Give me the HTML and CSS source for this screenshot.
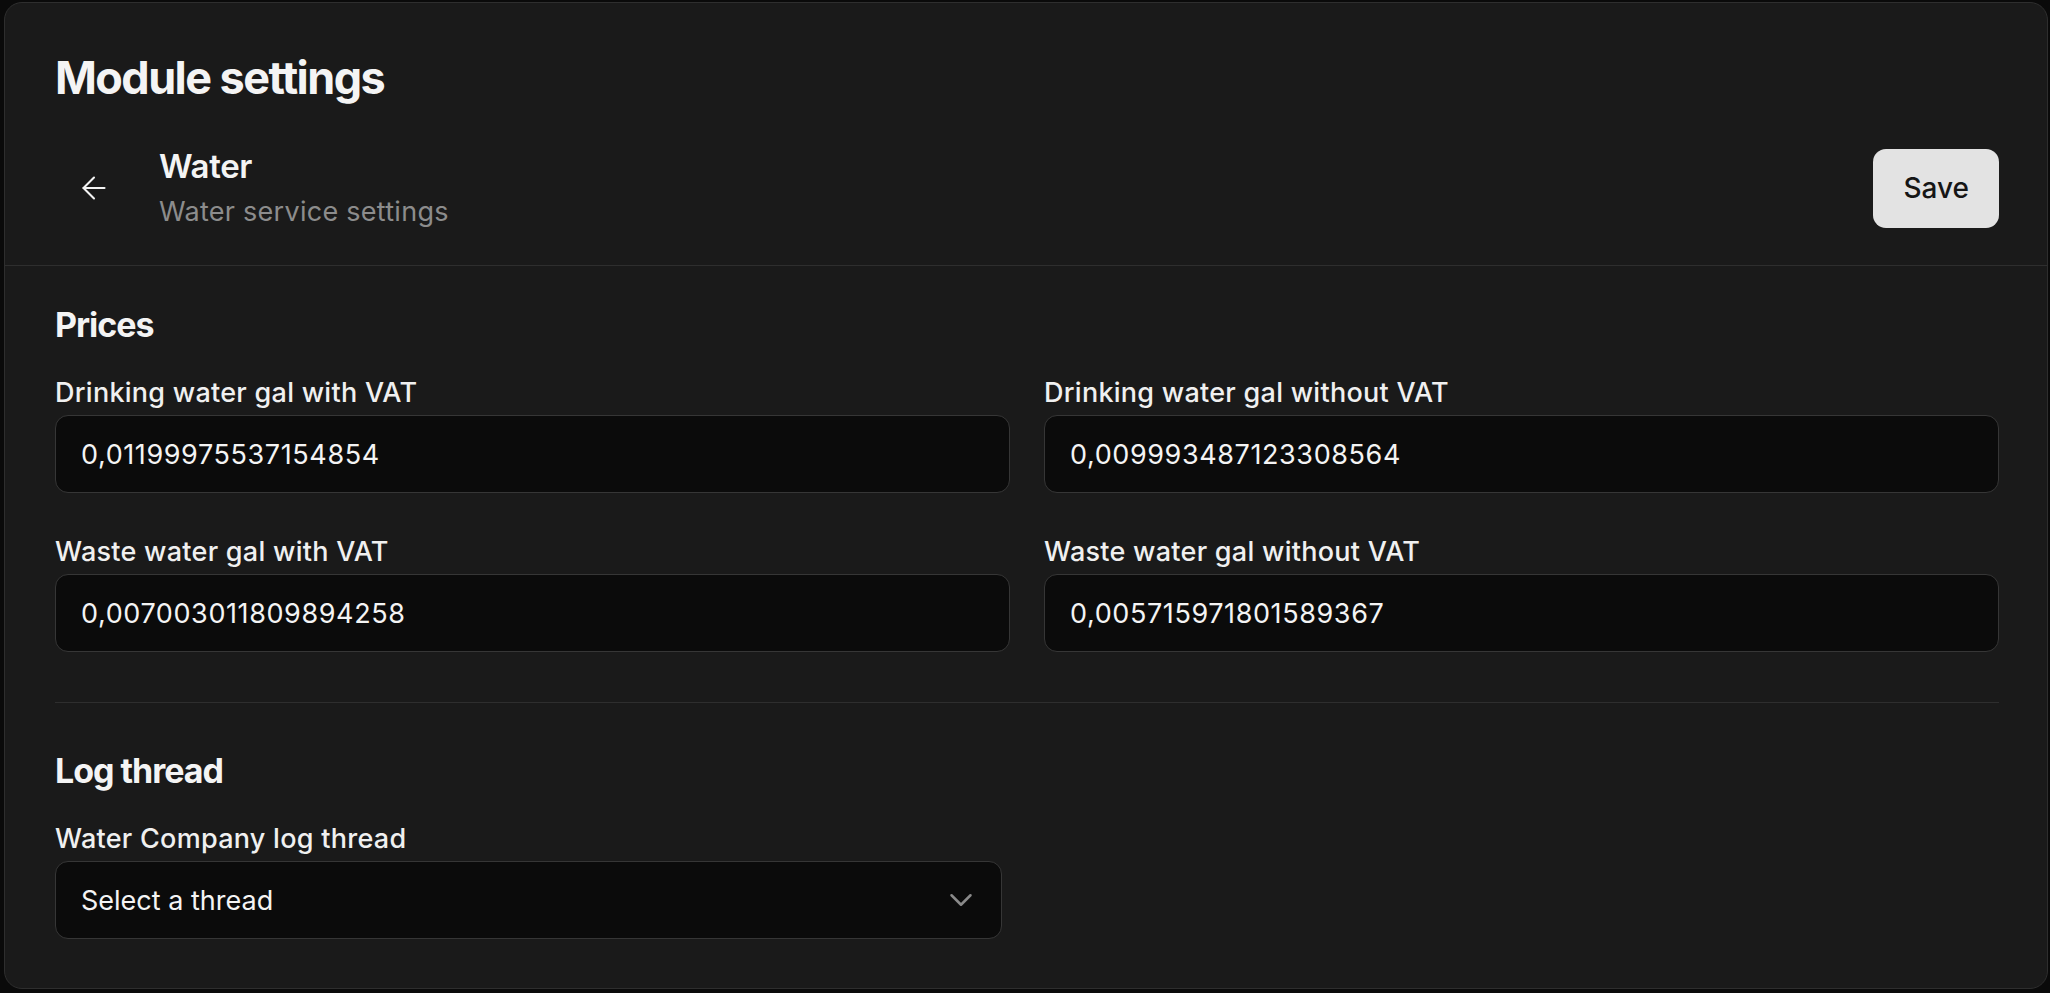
FILE: index.html
```html
<!DOCTYPE html>
<html lang="en">
<head>
    <meta charset="UTF-8">
    <meta name="viewport" content="width=device-width, initial-scale=1.0">
    <title>Module settings</title>
    <link rel="stylesheet" href="styles.css">
</head>
<body>
    <div class="page">
        <div class="card">
            <header class="card-header">
                <h1>Module settings</h1>
                <div class="module-bar">
                    <button class="back-btn" type="button" aria-label="Back">
                        <svg width="36" height="36" viewBox="0 0 24 24" fill="none" stroke="currentColor" stroke-width="1.4" stroke-linecap="round" stroke-linejoin="round">
                            <path d="m12 19-7-7 7-7"/>
                            <path d="M19 12H5"/>
                        </svg>
                    </button>
                    <div class="module-titles">
                        <h2>Water</h2>
                        <p>Water service settings</p>
                    </div>
                    <button class="save-btn" type="button">Save</button>
                </div>
            </header>

            <main class="card-body">
                <section class="settings-section">
                    <h3>Prices</h3>
                    <div class="field-grid">
                        <label class="field">
                            <span class="field-label">Drinking water gal with VAT</span>
                            <input class="field-input" type="text" value="0,01199975537154854">
                        </label>
                        <label class="field">
                            <span class="field-label">Drinking water gal without VAT</span>
                            <input class="field-input" type="text" value="0,009993487123308564">
                        </label>
                        <label class="field">
                            <span class="field-label">Waste water gal with VAT</span>
                            <input class="field-input" type="text" value="0,007003011809894258">
                        </label>
                        <label class="field">
                            <span class="field-label">Waste water gal without VAT</span>
                            <input class="field-input" type="text" value="0,005715971801589367">
                        </label>
                    </div>
                </section>

                <hr class="divider">

                <section class="settings-section">
                    <h3>Log thread</h3>
                    <div class="field-grid log-grid">
                        <div class="field">
                            <span class="field-label">Water Company log thread</span>
                            <div class="field-select">
                                <span>Select a thread</span>
                                <svg width="38" height="38" viewBox="0 0 24 24" fill="none" stroke="currentColor" stroke-width="1.6" stroke-linecap="round" stroke-linejoin="round">
                                    <path d="m6 9 6 6 6-6"/>
                                </svg>
                            </div>
                        </div>
                    </div>
                </section>
            </main>
        </div>
    </div>
</body>
</html>
```

FILE: styles.css
```css
* {
    box-sizing: border-box;
}

body {
    margin: 0;
    background-color: #0a0a0a;
    color: #f4f4f4;
    font-family: Inter, "Noto Sans", Arial, sans-serif;
}

.page {
    padding: 2px 2px 4px 4px;
    height: 993px;
}

.card {
    height: 100%;
    background-color: #1a1a1a;
    border: 1px solid #2e2e2e;
    border-radius: 18px;
}

.card-header {
    padding: 48px 48px 35px 50px;
    border-bottom: 1px solid #2e2e2e;
}

.card-header h1 {
    margin: 0 0 41px;
    font-size: 45px;
    line-height: 54px;
    font-weight: 700;
    letter-spacing: -0.035em;
}

.module-bar {
    display: flex;
    align-items: center;
}

.back-btn {
    width: 78px;
    height: 78px;
    margin-right: 26px;
    display: flex;
    align-items: center;
    justify-content: center;
    background: none;
    border: none;
    border-radius: 12px;
    color: #f4f4f4;
    padding: 0;
    cursor: pointer;
}

.module-titles {
    flex: 1;
}

.module-titles h2 {
    margin: 0 0 8px;
    font-size: 33px;
    line-height: 40px;
    font-weight: 600;
    letter-spacing: -0.01em;
}

.module-titles p {
    margin: 0;
    font-size: 27px;
    line-height: 36px;
    color: #8c8c8c;
    letter-spacing: 0.01em;
}

.save-btn {
    height: 79px;
    padding: 0 30px;
    background-color: #e3e3e3;
    color: #161616;
    border: none;
    border-radius: 13px;
    font-family: inherit;
    font-size: 28px;
    font-weight: 500;
    cursor: pointer;
}

.card-body {
    padding: 39px 48px 0 50px;
}

.settings-section h3 {
    margin: 0 0 30px;
    font-size: 34px;
    line-height: 40px;
    font-weight: 700;
    letter-spacing: -0.03em;
}

.field-grid {
    display: grid;
    grid-template-columns: 1fr 1fr;
    column-gap: 34px;
    row-gap: 41px;
}

.log-grid {
    column-gap: 50px;
}

.field {
    display: flex;
    flex-direction: column;
    gap: 4px;
}

.field-label {
    font-size: 27px;
    line-height: 36px;
    font-weight: 500;
    color: #f0f0f0;
    letter-spacing: 0.01em;
}

.field-input,
.field-select {
    height: 78px;
    width: 100%;
    padding: 0 25px;
    background-color: #0b0b0b;
    border: 1px solid #363636;
    border-radius: 13px;
    color: #f4f4f4;
    font-family: inherit;
    font-size: 27px;
}

.field-input {
    letter-spacing: 0.6px;
}

.field-select {
    display: flex;
    align-items: center;
    justify-content: space-between;
    padding-right: 21px;
}

.field-select svg {
    color: #8a8a8a;
}

.divider {
    margin: 50px 0 48px;
    border: none;
    border-top: 1px solid #2e2e2e;
}
```
